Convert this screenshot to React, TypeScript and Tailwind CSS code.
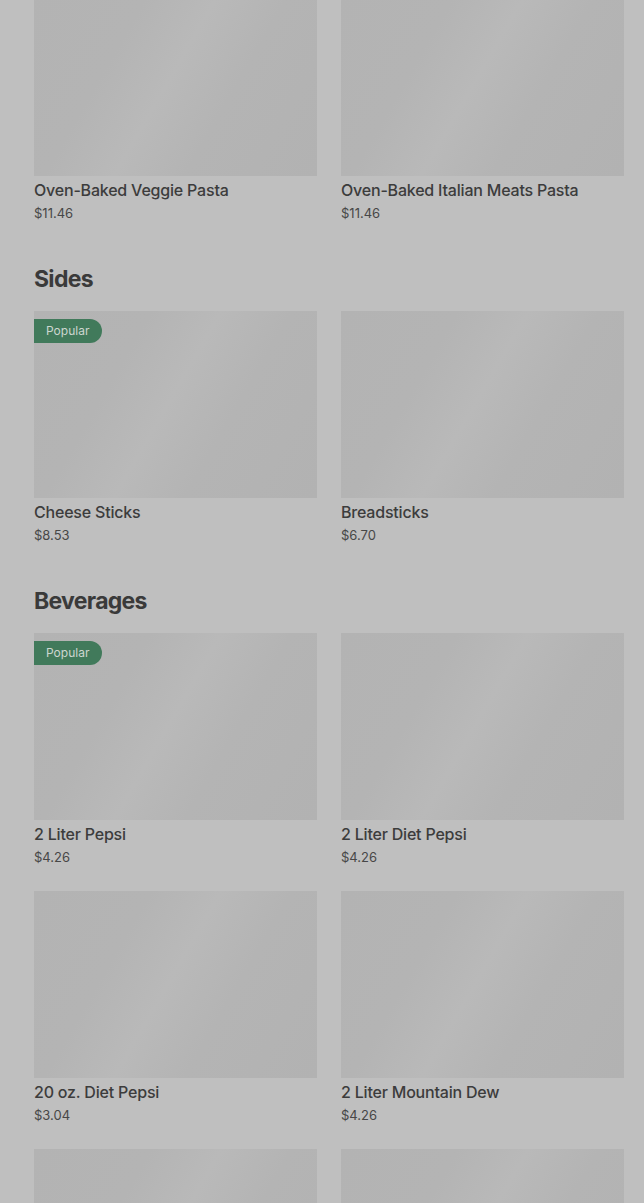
import React from "react";

type Item = { name: string; price: string; popular?: boolean; hideText?: boolean };

const sections: { title?: string; items: Item[] }[] = [
  {
    items: [
      { name: "Oven-Baked Veggie Pasta", price: "$11.46" },
      { name: "Oven-Baked Italian Meats Pasta", price: "$11.46" },
    ],
  },
  {
    title: "Sides",
    items: [
      { name: "Cheese Sticks", price: "$8.53", popular: true },
      { name: "Breadsticks", price: "$6.70" },
    ],
  },
  {
    title: "Beverages",
    items: [
      { name: "2 Liter Pepsi", price: "$4.26", popular: true },
      { name: "2 Liter Diet Pepsi", price: "$4.26" },
      { name: "20 oz. Diet Pepsi", price: "$3.04" },
      { name: "2 Liter Mountain Dew", price: "$4.26" },
      { name: "20 oz. Pepsi", price: "$3.04", hideText: true },
      { name: "20 oz. Mountain Dew", price: "$3.04", hideText: true },
    ],
  },
];

function Card({ item }: { item: Item }) {
  return (
    <div className="flex flex-col">
      <div className="relative h-[187px] w-full bg-[linear-gradient(120deg,#b3b3b3_0%,#b4b4b4_30%,#b9b9b9_48%,#b4b4b4_66%,#b2b2b2_100%)]">
        {item.popular && (
          <div className="absolute left-0 top-[8px] flex h-[24px] w-[68px] items-center rounded-r-full bg-[#417a5b] pl-[12px] text-[12px] leading-none text-[#cdd6d0]">
            Popular
          </div>
        )}
      </div>
      {!item.hideText && (
        <>
          <div className="mt-[4px] text-[16px] font-medium leading-[20px] tracking-[-0.2px] text-[#3c3c3c]">
            {item.name}
          </div>
          <div className="mt-[3px] text-[13px] leading-[20px] text-[#474747]">
            {item.price}
          </div>
        </>
      )}
    </div>
  );
}

export default function App() {
  return (
    <div
      className="h-[1203px] w-full overflow-hidden bg-[#bfbfbf]"
      style={{ fontFamily: "Inter, 'Noto Sans', sans-serif" }}
    >
      <div className="-mt-[11px] flex flex-col pl-[34px] pr-[20px]">
        {sections.map((s, i) => (
          <div key={i} className={i > 0 ? "mt-[40px] flex flex-col" : "flex flex-col"}>
            {s.title && (
              <h2 className="mb-[16px] text-[23px] font-bold leading-[32px] tracking-[-0.7px] text-[#3a3a3a]">
                {s.title}
              </h2>
            )}
            <div className="grid grid-cols-2 gap-x-6 gap-y-6">
              {s.items.map((it) => (
                <Card key={it.name} item={it} />
              ))}
            </div>
          </div>
        ))}
      </div>
    </div>
  );
}
